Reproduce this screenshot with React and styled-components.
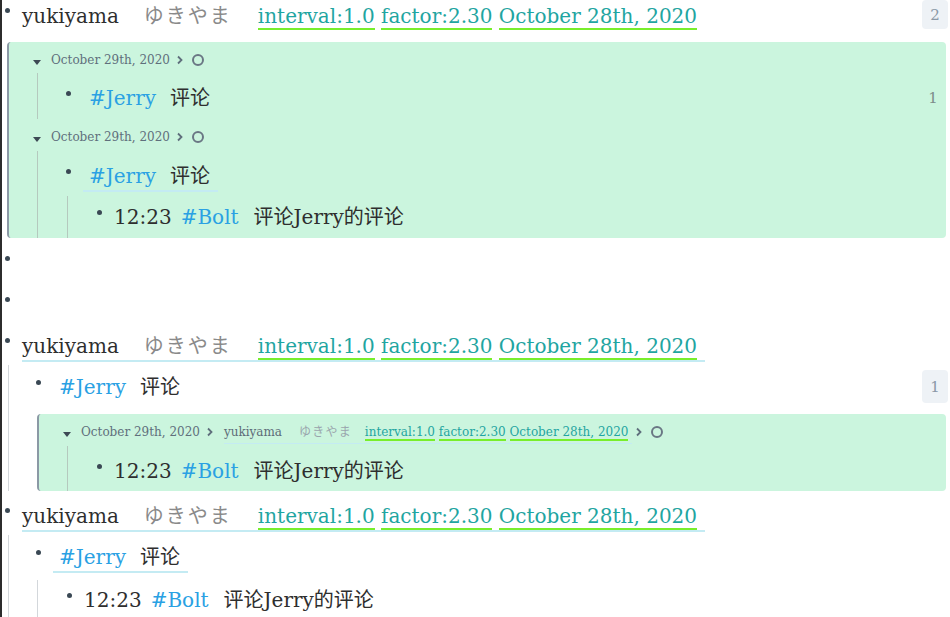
import React from 'react';
import styled, { createGlobalStyle } from 'styled-components';

const GlobalStyle = createGlobalStyle`
  html, body { margin: 0; padding: 0; background: #fff; }
  body {
    font-family: "DejaVu Serif", "Noto Sans CJK SC", serif;
    color: #2e2e2e;
  }
`;

const Page = styled.div`
  min-height: 617px;
  border-left: 2px solid #2c2c2c;
  overflow: hidden;
`;

const Block = styled.div`
  padding-left: ${p => p.$pl || 0}px;
  margin-top: ${p => p.$mt || 0}px;
`;

const Row = styled.div`
  display: flex;
  align-items: flex-start;
  min-height: 30px;
  padding: ${p => p.$pt || 0}px 0 ${p => p.$pb || 0}px;
  font-size: 20px;
  line-height: 30px;
`;

const Bullet = styled.span`
  flex: none;
  width: 5px;
  height: 5px;
  border-radius: 50%;
  background: #3a4854;
  margin: 8px 12px 0 0;
`;

const Content = styled.div`
  flex: 1;
  min-width: 0;
  white-space: nowrap;
`;

const Title = styled.span`
  padding: 0 ${p => (p.$small ? 4 : 8)}px ${p => (p.$small ? 1 : 2)}px 0;
  border-bottom: ${p => (p.$small ? 1 : 2)}px solid ${p => (p.$line ? '#c4ebf3' : 'transparent')};
`;

const Name = styled.span`
  color: ${p => (p.$small ? '#5d6c78' : '#2e2e2e')};
  margin-right: ${p => (p.$small ? 17 : 25)}px;
`;

const Kana = styled.span`
  font-family: "Noto Sans CJK JP", sans-serif;
  color: ${p => (p.$small ? '#9aa5ad' : '#8a8a8a')};
  letter-spacing: ${p => (p.$small ? 1.2 : 2)}px;
  margin-right: ${p => (p.$small ? 13 : 26)}px;
`;

const Attr = styled.span`
  color: #1fa5a1;
  border-bottom: 2px solid #78ee2c;
`;

const Tag = styled.span`
  color: #2aa1e3;
  margin-right: ${p => p.$gap || 14}px;
`;

const Phrase = styled.span`
  padding: 0 ${p => (p.$line ? 8 : 6)}px 2px 6px;
  border-bottom: 2px solid ${p => (p.$line ? '#c4ebf3' : 'transparent')};
`;

const Time = styled.span`
  margin-right: 9px;
`;

const Count = styled.span`
  flex: none;
  margin: ${p => p.$mt || 0}px ${p => p.$mr || 0}px 0 auto;
  width: 26px;
  height: ${p => p.$h || 29}px;
  border-radius: 4px;
  background: ${p => (p.$flat ? 'transparent' : '#eef2f6')};
  color: ${p => (p.$flat ? '#7d8d8a' : '#8a99a6')};
  font-size: 15px;
  display: flex;
  align-items: center;
  justify-content: center;
`;

const Embed = styled.div`
  margin: ${p => p.$mt || 0}px 4px 0 ${p => p.$ml || 0}px;
  padding-top: 8px;
  background: #cbf5de;
  border-left: 2px solid #8b99a5;
  border-radius: 4px;
`;

const Crumbs = styled.div`
  display: flex;
  align-items: center;
  height: 20px;
  margin-top: ${p => p.$mt || 0}px;
  padding-left: 24px;
  font-size: 12px;
  line-height: 20px;
  color: #5f6f7c;
  white-space: nowrap;
`;

const Caret = styled.span`
  width: 0;
  height: 0;
  border-left: 4px solid transparent;
  border-right: 4px solid transparent;
  border-top: 5px solid #3d4954;
  margin: 4px 10px 0 0;
`;

const Chevron = styled.svg`
  flex: none;
  width: 6px;
  height: 10px;
  margin: 0 ${p => p.$mr || 9}px 0 ${p => p.$ml || 7}px;
`;

const Ring = styled.span`
  width: 8px;
  height: 8px;
  border: 2px solid #6a7784;
  border-radius: 50%;
`;

const Kids = styled.div`
  margin: ${p => p.$mt || 0}px 0 0 ${p => p.$ml || 0}px;
  padding-left: ${p => p.$pl || 28}px;
  border-left: 1px solid ${p => p.$tone || '#d3d7db'};
`;

const Arrow = ({ ml, mr }) => (
  <Chevron $ml={ml} $mr={mr} viewBox="0 0 6 10">
    <path d="M1 1.5 L4.5 5 L1 8.5" fill="none" stroke="#5f6f7c" strokeWidth="1.8" />
  </Chevron>
);

const Header = ({ line, small }) => (
  <Title $line={line} $small={small}>
    <Name $small={small}>yukiyama</Name>
    <Kana $small={small}>ゆきやま</Kana>
    <Attr>interval:1.0</Attr> <Attr>factor:2.30</Attr> <Attr>October 28th, 2020</Attr>
  </Title>
);

const Reply = ({ pt, pb }) => (
  <Row $pt={pt} $pb={pb}>
    <Bullet />
    <Content>
      <Time>12:23</Time>
      <Tag $gap={15}>#Bolt</Tag>评论Jerry的评论
    </Content>
  </Row>
);

export default function App() {
  return (
    <Page>
      <GlobalStyle />

      <Block $pl={3}>
        <Row>
          <Bullet />
          <Content>
            <Header />
          </Content>
          <Count $mr={2}>2</Count>
        </Row>
        <Embed $mt={11} $ml={2}>
          <Crumbs>
            <Caret />
            October 29th, 2020
            <Arrow />
            <Ring />
          </Crumbs>
          <Kids $mt={3} $ml={28} $tone="#b5c9be">
            <Row $pt={10} $pb={6}>
              <Bullet />
              <Content>
                <Phrase>
                  <Tag>#Jerry</Tag>评论
                </Phrase>
              </Content>
              <Count $flat $mt={0} $h={30}>1</Count>
            </Row>
          </Kids>
          <Crumbs $mt={8}>
            <Caret />
            October 29th, 2020
            <Arrow />
            <Ring />
          </Crumbs>
          <Kids $mt={4} $ml={28} $tone="#b5c9be">
            <Block>
              <Row $pt={10} $pb={5}>
                <Bullet />
                <Content>
                  <Phrase $line>
                    <Tag>#Jerry</Tag>评论
                  </Phrase>
                </Content>
              </Row>
              <Kids $ml={1} $pl={29} $tone="#b5c9be">
                <Reply pt={6} pb={6} />
              </Kids>
            </Block>
          </Kids>
        </Embed>
      </Block>

      <Block $pl={3}>
        <Row $pt={10} $pb={11}>
          <Bullet />
        </Row>
      </Block>
      <Block $pl={3}>
        <Row>
          <Bullet />
        </Row>
      </Block>

      <Block $pl={3} $mt={11}>
        <Row>
          <Bullet />
          <Content>
            <Header line />
          </Content>
        </Row>
        <Kids $mt={4} $ml={3} $pl={27}>
          <Row $pt={7}>
            <Bullet />
            <Content>
              <Phrase>
                <Tag>#Jerry</Tag>评论
              </Phrase>
            </Content>
            <Count $mt={-2} $h={33} $mr={2}>1</Count>
          </Row>
          <Embed $mt={11} $ml={1}>
            <Crumbs>
              <Caret />
              October 29th, 2020
              <Arrow mr={11} />
              <Header line small />
              <Arrow ml={4} />
              <Ring />
            </Crumbs>
            <Kids $mt={4} $ml={28} $pl={29} $tone="#b5c9be">
              <Reply pt={10} pb={5} />
            </Kids>
          </Embed>
        </Kids>
      </Block>

      <Block $pl={3}>
        <Row $pt={9}>
          <Bullet />
          <Content>
            <Header line />
          </Content>
        </Row>
        <Kids $mt={4} $ml={3} $pl={27}>
          <Row $pt={7} $pb={8}>
            <Bullet />
            <Content>
              <Phrase $line>
                <Tag>#Jerry</Tag>评论
              </Phrase>
            </Content>
          </Row>
          <Kids $ml={1} $pl={29}>
            <Reply pt={5} pb={6} />
          </Kids>
        </Kids>
      </Block>
    </Page>
  );
}
